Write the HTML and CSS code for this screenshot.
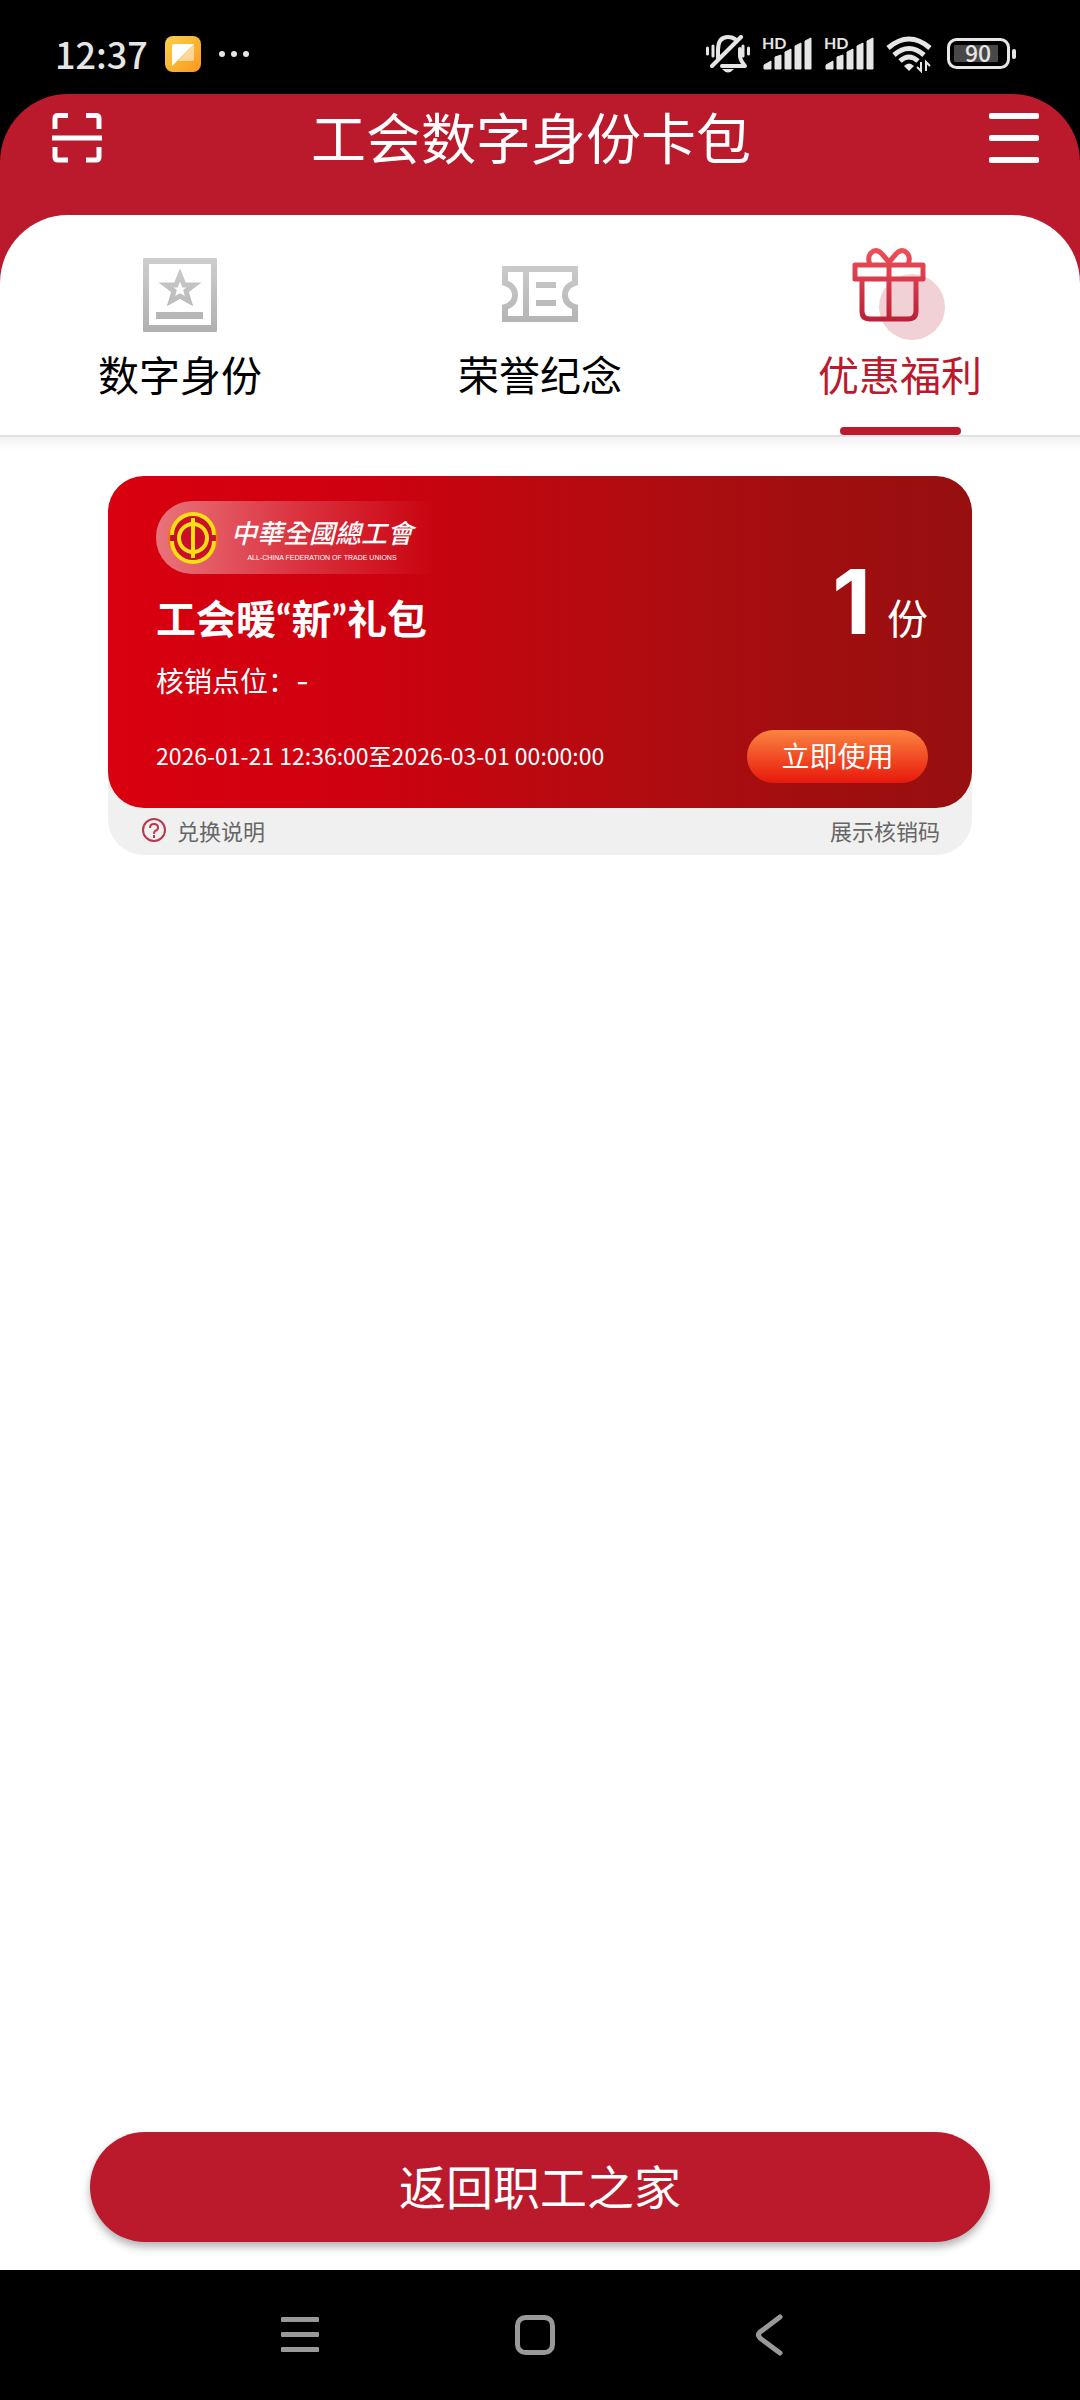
FILE: index.html
```
<!DOCTYPE html>
<html lang="zh-CN">
<head>
<meta charset="UTF-8">
<meta name="viewport" content="width=device-width, initial-scale=1">
<title>工会数字身份卡包</title>
<link rel="stylesheet" href="styles.css">
</head>
<body>
 <div id="status">
  <span class="time">12:37</span>
  <svg class="app_icon" width="36" height="36" viewBox="0 0 36 36">
   <defs>
    <linearGradient id="gApp" x1="0" y1="0" x2="1" y2="1">
     <stop offset="0" stop-color="#fbd24a"/>
     <stop offset="1" stop-color="#fb961e"/>
    </linearGradient>
   </defs>
   <rect width="36" height="36" rx="8" fill="url(#gApp)"/>
   <path d="M29 8v15q0 2-2 2H13z" fill="#fff" opacity=".5"/>
   <path d="M7 10q0-2 2-2h20L7 30z" fill="#fff"/>
  </svg>
  <svg width="32" height="8" viewBox="0 0 32 8" fill="#e6e6e6">
   <circle cx="4" cy="4" r="3"/><circle cx="16" cy="4" r="3"/><circle cx="28" cy="4" r="3"/>
  </svg>
  <div class="status_right">
   <svg width="44" height="38" viewBox="0 0 44 38" fill="none" stroke="#e6e6e6" stroke-width="4">
    <path d="M12 23V15Q12 2 22 2q4 0 7 2M34 14v7q0 4 5 10H16" stroke-linejoin="round" stroke-linecap="round"/>
    <path d="M6 31L35 2" stroke-linecap="round"/>
    <path d="M1.500 13v6M7 11v10M37 11v10M42.500 13v6" stroke-width="3" stroke-linecap="round"/>
    <path d="M16 34h12q-6 7-12 0z" fill="#e6e6e6" stroke="none"/>
   </svg>
   <svg width="50" height="46" viewBox="0 -4 50 46" fill="#e6e6e6">
    <text x="0" y="14" class="hd">HD</text>
    <path d="M2 34v-4l7-4v8zM13 34V22l6-2v14zM23 34V17l6-3v20zM33 34V11l6-3v26zM43 34V6l6-3v31z" stroke="#e6e6e6"/>
   </svg>
   <svg width="50" height="46" viewBox="0 -4 50 46" fill="#e6e6e6">
    <text x="0" y="14" class="hd">HD</text>
    <path d="M2 34v-4l7-4v8zM13 34V22l6-2v14zM23 34V17l6-3v20zM33 34V11l6-3v26zM43 34V6l6-3v31z" stroke="#e6e6e6"/>
   </svg>
   <svg width="49" height="38" viewBox="0 0 49 38" fill="none" stroke="#e6e6e6" stroke-width="5">
    <path d="M2 13Q23-5 44 13M8 20q15-13 30 0M14 26q9-8 18 0"/>
    <path d="M18 31q5-5 10 0l-5 5z" fill="#e6e6e6" stroke="none"/>
    <path d="M35 27v9l-4-4M40 36V27l4 4" stroke-width="2"/>
   </svg>
   <svg width="69" height="38" viewBox="0 0 69 38">
    <rect x="1.500" y="4.500" width="60" height="28" rx="8" fill="none" stroke="#e6e6e6" stroke-width="3"/>
    <rect x="7" y="10" width="44" height="17" rx="1" fill="#484848"/>
    <rect x="65" y="14" width="4" height="10" rx="2" fill="#e6e6e6"/>
    <text x="31" y="27" class="battery">90</text>
   </svg>
  </div>
 </div>

 <div id="wrap">
  <header id="header">
   <button type="button" class="btn_scan" aria-label="扫一扫">
    <svg width="50" height="50" viewBox="0 0 50 50" fill="none" stroke="#fff" stroke-width="5">
     <path d="M16 2.500H6q-3 0-3 3V16M34 2.500h10q3 0 3 3V16M3 34v10q0 3 3 3h10M47 34v10q0 3-3 3H34"/>
     <path d="M0 25h50"/>
    </svg>
   </button>
   <h1>工会数字身份卡包</h1>
   <button type="button" class="btn_menu" aria-label="菜单">
    <svg width="50" height="50" viewBox="0 0 50 50" fill="#fff">
     <rect width="50" height="6" rx="2"/><rect y="22" width="50" height="6" rx="2"/><rect y="44" width="50" height="6" rx="2"/>
    </svg>
   </button>
  </header>

  <div id="content">
   <nav id="tabs">
    <a href="#identity" class="tab">
     <svg width="124" height="102" viewBox="0 0 124 102">
      <defs>
       <linearGradient id="gGray" gradientUnits="userSpaceOnUse" x1="0" y1="14" x2="0" y2="92">
        <stop offset="0" stop-color="#cfcfcf"/>
        <stop offset="1" stop-color="#b0b0b0"/>
       </linearGradient>
      </defs>
      <path fill="url(#gGray)" fill-rule="evenodd" d="M26 17h72q1 0 1 1v72q0 1-1 1H26q-1 0-1-1V18q0-1 1-1zM31 23v61h62V23z"/>
      <path fill="none" stroke="url(#gGray)" stroke-width="5" d="M62 34l4 10h10l-8 6 3 10-9-5-9 5 3-10-8-6h10z"/>
      <rect x="38" y="71" width="47" height="7" fill="url(#gGray)"/>
     </svg>
     <span>数字身份</span>
    </a>
    <a href="#honor" class="tab">
     <svg width="124" height="102" viewBox="0 0 124 102" fill="none" stroke="url(#gGray)" stroke-width="6">
      <path d="M27 28h70v14q-10 3-10 12t10 12v12H27V66q10-3 10-12T27 42z"/>
      <path d="M48 28v50M58 44h20M58 62h20"/>
     </svg>
     <span>荣誉纪念</span>
    </a>
    <a href="#welfare" class="tab active">
     <svg width="124" height="102" viewBox="0 0 124 102">
      <defs>
       <linearGradient id="gGift" gradientUnits="userSpaceOnUse" x1="0" y1="6" x2="0" y2="80">
        <stop offset="0" stop-color="#f05058"/>
        <stop offset="1" stop-color="#bb2038"/>
       </linearGradient>
      </defs>
      <circle cx="74" cy="66" r="33" fill="#bb1a2d" opacity=".2"/>
      <g fill="none" stroke="url(#gGift)" stroke-width="5" stroke-linejoin="round">
       <rect x="17" y="24" width="68" height="14"/>
       <path d="M24 38v32q0 8 8 8h38q8 0 8-8V38M51 24v54"/>
       <path d="M32 24q-3-8 1-12 5-5 11 1l7 8 7-8q6-6 11-1 4 4 1 12"/>
      </g>
     </svg>
     <span>优惠福利</span>
    </a>
   </nav>

   <main>
    <section class="coupon">
     <div class="card">
      <div class="card_top">
       <div>
        <div class="logo">
         <svg width="52" height="52" viewBox="0 0 52 52" fill="none" stroke="#fadf15" stroke-width="4">
          <circle cx="26" cy="26" r="24" fill="#c8102a" stroke="#e8761a" stroke-width="2"/>
          <path d="M5 23a21 21 0 0 1 42 0M5 29a21 21 0 0 0 42 0"/>
          <circle cx="26" cy="26" r="14"/>
          <path d="M26 6v40"/>
         </svg>
         <div class="logo_text">
          <p class="logo_cn" lang="zh-Hant">中華全國總工會</p>
          <p class="logo_en">ALL-CHINA FEDERATION OF TRADE UNIONS</p>
         </div>
        </div>
        <h2>工会暖“新”礼包</h2>
        <p class="place">核销点位：-</p>
       </div>
       <p class="count"><b>1</b>份</p>
      </div>
      <div class="card_bottom">
       <span class="date">2026-01-21 12:36:00至2026-03-01 00:00:00</span>
       <button type="button" class="btn_use">立即使用</button>
      </div>
     </div>
     <div class="coupon_foot">
      <a href="#desc">
       <svg width="24" height="24" viewBox="0 0 24 24" fill="none" stroke="#b8394c" stroke-width="2">
        <circle cx="12" cy="12" r="11"/>
        <path d="M8 10q0-4 4-4t4 4q0 2-3 3-1 1-1 3M12 17v3"/>
       </svg>
       兑换说明
      </a>
      <a href="#code">展示核销码</a>
     </div>
    </section>
   </main>

   <button type="button" class="btn_back">返回职工之家</button>
  </div>
 </div>

 <div id="navbar">
  <button type="button" aria-label="最近任务">
   <svg width="42" height="42" viewBox="0 0 42 42" fill="#999">
    <rect x="2" y="3" width="38" height="5" rx="1"/><rect x="2" y="18" width="38" height="5" rx="1"/><rect x="2" y="33" width="38" height="5" rx="1"/>
   </svg>
  </button>
  <button type="button" aria-label="主屏幕">
   <svg width="42" height="42" viewBox="0 0 42 42" fill="none" stroke="#999" stroke-width="5">
    <rect x="3.500" y="3.500" width="35" height="35" rx="8"/>
   </svg>
  </button>
  <button type="button" aria-label="返回">
   <svg width="42" height="42" viewBox="0 0 42 42" fill="none" stroke="#999" stroke-width="5" stroke-linecap="round" stroke-linejoin="round">
    <path d="M31 3L11 18q-3 3 0 6l20 15"/>
   </svg>
  </button>
 </div>
</body>
</html>
```

FILE: styles.css
```
* {
 box-sizing: border-box;
 margin: 0;
 padding: 0;
}

body {
 display: flex;
 flex-direction: column;
 min-height: 100vh;
 background-color: #000;
 font-family: "Noto Sans CJK SC", sans-serif;
}

svg {
 display: block;
 flex: none;
}

button {
 border: 0;
 background: none;
 color: #fff;
 font-family: inherit;
}

a {
 color: inherit;
 text-decoration: none;
}

/* status bar */
#status {
 display: flex;
 align-items: center;
 height: 94px;
 padding: 14px 64px 0 55px;
 color: #e6e6e6;
}
.time {
 padding-bottom: 2px;
 font-size: 36px;
 font-weight: 500;
 line-height: 40px;
}
.app_icon {
 margin: 0 17px;
}
.status_right {
 display: flex;
 align-items: center;
 gap: 12px;
 margin-left: auto;
}
.hd {
 font-family: Lato, sans-serif;
 font-size: 16px;
 font-weight: bold;
}
.battery {
 fill: #e6e6e6;
 font-size: 23px;
 font-weight: 500;
 text-anchor: middle;
}

/* header */
#wrap {
 flex: 1;
 display: flex;
 flex-direction: column;
 border-radius: 68px 68px 0 0;
 background-color: #bb1a2d;
}
#header {
 display: grid;
 grid-template-columns: 102px 1fr 120px;
 align-items: center;
 height: 121px;
 padding-bottom: 33px;
 color: #fff;
}
#header h1 {
 padding-bottom: 6px;
 font-size: 55px;
 font-weight: normal;
 line-height: 60px;
 text-align: center;
}
.btn_scan {
 padding-left: 52px;
}
.btn_menu {
 padding-left: 29px;
}

#content {
 flex: 1;
 display: flex;
 flex-direction: column;
 border-radius: 68px 68px 0 0;
 background-color: #fff;
}

/* tabs */
#tabs {
 display: grid;
 grid-template-columns: repeat(3, 1fr);
 height: 220px;
}
.tab {
 position: relative;
 display: flex;
 flex-direction: column;
 align-items: center;
 padding-top: 26px;
 color: #000;
 font-size: 41px;
 line-height: 60px;
}
.active {
 color: #bb1a2d;
}
.active::after {
 content: "";
 position: absolute;
 bottom: 0;
 width: 121px;
 height: 8px;
 border-radius: 4px;
 background-color: #bb1a2d;
}

/* coupon */
main {
 flex: 1;
 padding: 39px 10% 0;
 border-top: 2px solid #e2e2e2;
 background: linear-gradient(#f3f3f3, #fff 14px);
}
.coupon {
 border-radius: 36px;
 background-color: #f0f0f0;
}
.card {
 padding: 25px 44px 25px 48px;
 border-radius: 36px;
 background: linear-gradient(90deg, #d9000f, #ce0110 30%, #b80a10 53%, #a30e10 78%, #970f0f);
 color: #fff;
}
.card_top, .card_bottom, .coupon_foot {
 display: flex;
 justify-content: space-between;
}
.logo {
 display: flex;
 align-items: center;
 gap: 12px;
 width: 280px;
 height: 73px;
 padding-left: 11px;
 border-radius: 36px 0 0 36px;
 background: linear-gradient(90deg, rgba(255, 255, 255, 0.45), rgba(255, 255, 255, 0.2) 50%, rgba(255, 255, 255, 0));
}
.logo_cn {
 font-family: "Noto Sans CJK TC", sans-serif;
 font-size: 26px;
 font-style: italic;
 font-weight: 500;
 line-height: 40px;
 white-space: nowrap;
}
.logo_en {
 font-family: "Liberation Sans", sans-serif;
 font-size: 7px;
 line-height: 12px;
 text-align: center;
 white-space: nowrap;
}
.card h2 {
 margin-top: 25px;
 font-family: Lato, "Noto Sans CJK SC", sans-serif;
 font-size: 40px;
 line-height: 40px;
}
.place {
 margin-top: 29px;
 font-family: Inter, "Noto Sans CJK SC", sans-serif;
 font-size: 28px;
 line-height: 28px;
}
.count {
 padding-top: 56px;
 font-size: 41px;
 line-height: 90px;
}
.count b {
 margin-right: 16px;
 font-family: Inter, sans-serif;
 font-size: 90px;
}
.card_bottom {
 align-items: center;
 margin-top: 34px;
}
.date {
 padding-bottom: 4px;
 font-size: 23px;
}
.btn_use {
 width: 181px;
 height: 53px;
 padding-bottom: 3px;
 border-radius: 27px;
 background: linear-gradient(#fb8440, #e8180c);
 font-size: 28px;
}
.coupon_foot {
 align-items: center;
 height: 47px;
 padding: 0 32px 3px 34px;
 color: #666;
 font-size: 22px;
}
.coupon_foot a {
 display: flex;
 align-items: center;
 gap: 11px;
}

.btn_back {
 height: 110px;
 margin: 0 90px 28px;
 padding-bottom: 6px;
 border-radius: 55px;
 background-color: #bb1a2d;
 box-shadow: 0 5px 8px rgba(0, 0, 0, 0.3);
 font-size: 47px;
}

/* system navigation */
#navbar {
 display: flex;
 justify-content: center;
 align-items: center;
 gap: 193px;
 height: 130px;
 padding-right: 10px;
}
```
